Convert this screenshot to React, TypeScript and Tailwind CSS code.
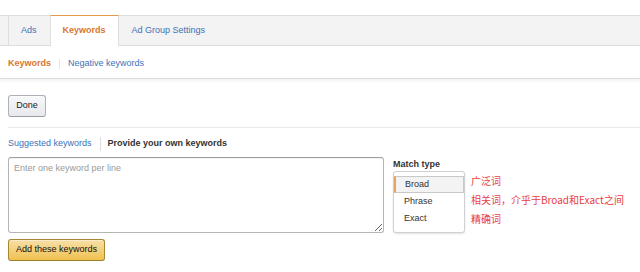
import React from "react";

export default function App() {
  return (
    <div className="w-[640px] h-[272px] overflow-hidden bg-white font-['Liberation_Sans',Arial,sans-serif] text-[9px] text-[#111] pt-[15px]">
      {/* Tab bar */}
      <div className="flex items-stretch h-[31px] border-y border-[#dedede] bg-[#f2f3f2] pl-[8px]">
        <div className="flex items-center pl-[12px] pr-[13px] border-l border-[#dedede] text-[#3d72b8] -my-px">Ads</div>
        <div className="flex items-center px-[12px] bg-white border-x border-[#dedede] border-t border-t-[#e69a4c] font-bold text-[#d9772e] -my-px">
          Keywords
        </div>
        <div className="flex items-center px-[13px] text-[#3d72b8]">Ad Group Settings</div>
      </div>

      {/* Sub nav */}
      <div className="flex items-center h-[33px] pt-[3px] pl-[8px] border-b border-[#dcdcdc] shadow-[0_2px_3px_rgba(0,0,0,0.05)]">
        <span className="font-bold text-[#d9772e]">Keywords</span>
        <span className="mx-[8px] w-px h-[10px] bg-[#e6e6e6]" />
        <span className="text-[#3d72b8]">Negative keywords</span>
      </div>

      {/* Done button */}
      <div className="pl-[8px] mt-[16px]">
        <button className="flex items-center justify-center w-[38px] h-[22px] rounded-[3px] border border-[#adb1b8] border-b-[#9a9ea4] bg-gradient-to-b from-[#f7f8fa] to-[#e7e9ec] text-[#222] shadow-[0_1px_0_rgba(255,255,255,0.6)_inset]">
          Done
        </button>
      </div>

      <div className="ml-[8px] mt-[10px] border-t border-[#e9e9e9]" />

      {/* Keyword source switch */}
      <div className="flex items-center h-[14px] mt-[9px] pl-[8px]">
        <span className="text-[#3d72b8]">Suggested keywords</span>
        <span className="ml-[8px] mr-[7px] w-px h-[14px] bg-[#dddddd]" />
        <span className="font-bold text-[#333]">Provide your own keywords</span>
      </div>

      {/* Input row */}
      <div className="flex items-start mt-[6px] pl-[8px]">
        <textarea
          placeholder="Enter one keyword per line"
          className="w-[376px] h-[76px] rounded-[3px] border border-[#b5b5b5] border-t-[#9e9e9e] px-[5px] py-[5px] leading-[11px] text-[9px] font-['Liberation_Sans',Arial,sans-serif] placeholder:text-[#9a9a9a] shadow-[inset_0_1px_0_rgba(0,0,0,0.05)] outline-none"
        />
        <div className="ml-[9px] flex flex-col">
          <div className="mt-[1px] h-[12px] leading-[12px] font-bold text-[#333]">Match type</div>
          <div className="mt-[1px] w-[72px] h-[62px] rounded-[3px] border border-[#d0d0d0] bg-white shadow-[0_1px_2px_rgba(0,0,0,0.12)] pt-[4px]">
            <div className="flex items-center h-[17px] pl-[9px] bg-[#f3f3f3] border border-[#c8c8c8] border-l-2 border-l-[#e6a25e] text-[#333]">
              Broad
            </div>
            <div className="flex items-center h-[17px] pl-[10px] text-[#333]">Phrase</div>
            <div className="flex items-center h-[17px] pl-[10px] text-[#333]">Exact</div>
          </div>
        </div>
        <div className="ml-[6px] mt-[14px] flex flex-col font-['Noto_Sans_CJK_SC','Noto_Sans',sans-serif] text-[10px] leading-[19px] text-[#e8403f]">
          <span>广泛词</span>
          <span>相关词，介乎于Broad和Exact之间</span>
          <span>精确词</span>
        </div>
      </div>

      {/* Add button */}
      <div className="pl-[8px] mt-[6px]">
        <button className="flex items-center justify-center w-[97px] h-[22px] rounded-[3px] border border-[#a88734] border-b-[#9c7e31] bg-gradient-to-b from-[#f7dfa5] to-[#f0c14b] text-[#111] shadow-[0_1px_0_rgba(255,255,255,0.4)_inset]">
          Add these keywords
        </button>
      </div>
    </div>
  );
}
